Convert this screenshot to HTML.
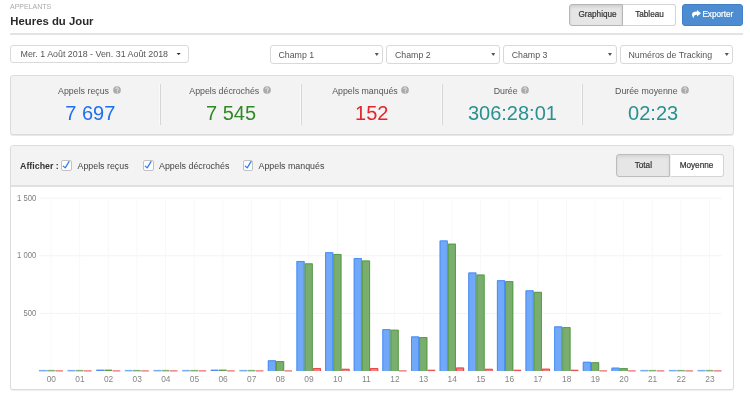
<!DOCTYPE html>
<html><head><meta charset="utf-8">
<style>
*{box-sizing:border-box;margin:0;padding:0}
html,body{width:750px;height:401px;overflow:hidden;background:#fff;font-family:"Liberation Sans",sans-serif;color:#333}
.a{position:absolute;white-space:nowrap}
.btn{position:absolute;border:1px solid #ccc;background:#fff;font-size:8.2px;-webkit-text-stroke:0.2px currentColor;color:#333;text-align:center;border-radius:3px}
.sel{position:absolute;top:45.3px;height:18.3px;width:113.7px;border:1px solid #d9d9d9;border-radius:3px;background:#fff;font-size:8.8px;color:#555;padding-left:7.8px;padding-top:0.8px;line-height:17px}
.sel .car{position:absolute;right:3.6px;top:6.6px;width:4px;height:3px;background:#555;clip-path:polygon(0 0,100% 0,50% 100%)}
.stat{position:absolute;top:0;width:140.7px;height:60px;text-align:center}
.stat .lb{position:absolute;left:0;right:2px;top:9px;font-size:8.8px;color:#555;line-height:12px}
.stat .vl{position:absolute;left:0;right:0;top:25px;font-size:20px;line-height:24px}
.q{display:inline-block;vertical-align:-0.3px;margin-left:3.6px}
.div{position:absolute;top:8.5px;width:1px;height:41px;background:#d6d6d6;box-shadow:-1px 0 0 rgba(255,255,255,.55)}
.cb{position:absolute;top:160.4px;width:10.8px;height:10.6px;border:1px solid #c2c2c2;border-radius:2px;background:#fff}
.cb svg{position:absolute;left:-1px;top:-1px}
.cbl{position:absolute;top:159.8px;font-size:8.85px;color:#444;line-height:13px}
</style></head><body><div id="root" style="position:absolute;left:0;top:0;width:750px;height:401px;will-change:transform">
<div class="a" style="left:10px;top:2.4px;font-size:7px;color:#aaa;line-height:9px">APPELANTS</div>
<div class="a" style="left:10.3px;top:14px;font-size:11.35px;font-weight:bold;color:#2a2a2a;line-height:14px">Heures du Jour</div>

<div class="btn" style="left:569px;top:4px;width:54px;height:22px;line-height:20px;padding-left:3px;background:#e6e6e6;border-color:#b5b5b5;border-radius:3px 0 0 3px;box-shadow:inset 0 2px 3px rgba(0,0,0,.1)">Graphique</div>
<div class="btn" style="left:623px;top:4px;width:53px;height:22px;line-height:20px;padding-left:1px;border-radius:0 3px 3px 0;border-left:none;border-color:#d4d4d4">Tableau</div>
<div class="btn" style="left:682px;top:4px;width:61px;height:22px;line-height:20px;background:#4d8cd1;border-color:#4180c6;color:#fff;text-align:left;padding-left:19.4px">Exporter<svg style="position:absolute;left:8.6px;top:4.9px" width="9" height="8" viewBox="0 0 9 8"><path d="M5 0 L9 3.2 L5 6.4 V4.7 H4.4 C2.9 4.7 1.9 5.5 1.7 8 C0.5 6.9 0 5.7 0 4.7 C0 2.4 1.8 1.6 4.4 1.6 H5 Z" fill="#fff"/></svg></div>

<div class="a" style="left:10px;top:33px;width:733px;height:2px;background:#e3e3e3"></div>

<div class="btn" style="left:10px;top:45px;width:178.5px;height:17.5px;line-height:16px;text-align:left;padding-left:9.5px;font-size:8.9px;color:#555;border-color:#dadada;-webkit-text-stroke:0">Mer. 1 Août 2018 - Ven. 31 Août 2018<span style="position:absolute;left:165.2px;top:6.5px;width:5px;height:2.6px;background:#222;clip-path:polygon(0 0,100% 0,50% 100%)"></span></div>

<div class="sel" style="left:269.7px">Champ 1<span class="car"></span></div>
<div class="sel" style="left:386.2px">Champ 2<span class="car"></span></div>
<div class="sel" style="left:502.9px">Champ 3<span class="car"></span></div>
<div class="sel" style="left:619.7px">Numéros de Tracking<span class="car"></span></div>

<!-- stats panel -->
<div class="a" style="left:10px;top:74.5px;width:723.5px;height:60px;background:#f3f3f3;border:1px solid #dcdcdc;border-radius:3px;box-shadow:0 1px 0 rgba(0,0,0,.09)">
  <div class="stat" style="left:9px"><div class="lb">Appels reçus<svg class="q" width="8" height="8" viewBox="0 0 8 8"><circle cx="4" cy="4" r="3.85" fill="#ababab"/><path d="M2.7 3.1 C2.7 2.2 3.3 1.8 4 1.8 C4.8 1.8 5.3 2.3 5.3 3 C5.3 3.8 4.4 3.9 4.4 4.6 V4.9" fill="none" stroke="#e2e2e2" stroke-width="1.1"/><rect x="3.85" y="5.6" width="1.1" height="1.1" fill="#e2e2e2"/></svg></div><div class="vl" style="color:#1f6fef">7 697</div></div>
  <div class="div" style="left:148.8px"></div>
  <div class="stat" style="left:149.7px"><div class="lb">Appels décrochés<svg class="q" width="8" height="8" viewBox="0 0 8 8"><circle cx="4" cy="4" r="3.85" fill="#ababab"/><path d="M2.7 3.1 C2.7 2.2 3.3 1.8 4 1.8 C4.8 1.8 5.3 2.3 5.3 3 C5.3 3.8 4.4 3.9 4.4 4.6 V4.9" fill="none" stroke="#e2e2e2" stroke-width="1.1"/><rect x="3.85" y="5.6" width="1.1" height="1.1" fill="#e2e2e2"/></svg></div><div class="vl" style="color:#2f8a25">7 545</div></div>
  <div class="div" style="left:289.8px"></div>
  <div class="stat" style="left:290.4px"><div class="lb">Appels manqués<svg class="q" width="8" height="8" viewBox="0 0 8 8"><circle cx="4" cy="4" r="3.85" fill="#ababab"/><path d="M2.7 3.1 C2.7 2.2 3.3 1.8 4 1.8 C4.8 1.8 5.3 2.3 5.3 3 C5.3 3.8 4.4 3.9 4.4 4.6 V4.9" fill="none" stroke="#e2e2e2" stroke-width="1.1"/><rect x="3.85" y="5.6" width="1.1" height="1.1" fill="#e2e2e2"/></svg></div><div class="vl" style="color:#e4262a">152</div></div>
  <div class="div" style="left:430.6px"></div>
  <div class="stat" style="left:431.1px"><div class="lb">Durée<svg class="q" width="8" height="8" viewBox="0 0 8 8"><circle cx="4" cy="4" r="3.85" fill="#ababab"/><path d="M2.7 3.1 C2.7 2.2 3.3 1.8 4 1.8 C4.8 1.8 5.3 2.3 5.3 3 C5.3 3.8 4.4 3.9 4.4 4.6 V4.9" fill="none" stroke="#e2e2e2" stroke-width="1.1"/><rect x="3.85" y="5.6" width="1.1" height="1.1" fill="#e2e2e2"/></svg></div><div class="vl" style="color:#2b9090">306:28:01</div></div>
  <div class="div" style="left:571.3px"></div>
  <div class="stat" style="left:571.8px"><div class="lb">Durée moyenne<svg class="q" width="8" height="8" viewBox="0 0 8 8"><circle cx="4" cy="4" r="3.85" fill="#ababab"/><path d="M2.7 3.1 C2.7 2.2 3.3 1.8 4 1.8 C4.8 1.8 5.3 2.3 5.3 3 C5.3 3.8 4.4 3.9 4.4 4.6 V4.9" fill="none" stroke="#e2e2e2" stroke-width="1.1"/><rect x="3.85" y="5.6" width="1.1" height="1.1" fill="#e2e2e2"/></svg></div><div class="vl" style="color:#2b9090">02:23</div></div>
</div>

<!-- chart panel -->
<div class="a" style="left:10px;top:145px;width:723.5px;height:245px;background:#fff;border:1px solid #dcdcdc;border-radius:3px;overflow:hidden;box-shadow:0 1px 1px rgba(0,0,0,.07)">
  <div class="a" style="left:0;top:0;width:100%;height:41px;background:#f3f3f3;border-bottom:2px solid #e0e0e0"></div>
</div>
<div class="a" style="left:20px;top:159.8px;font-size:8.85px;font-weight:bold;color:#333;line-height:13px">Afficher :</div>
<div class="cb" style="left:61.3px"><svg width="11" height="11" viewBox="0 0 11 11"><path d="M2.2 6.1 L4.2 7.9 L8.0 1.6" fill="none" stroke="#2a7cf4" stroke-width="1.25" stroke-linecap="round" stroke-linejoin="round"/></svg></div>
<div class="cbl" style="left:77.5px">Appels reçus</div>
<div class="cb" style="left:143px"><svg width="11" height="11" viewBox="0 0 11 11"><path d="M2.2 6.1 L4.2 7.9 L8.0 1.6" fill="none" stroke="#2a7cf4" stroke-width="1.25" stroke-linecap="round" stroke-linejoin="round"/></svg></div>
<div class="cbl" style="left:159px">Appels décrochés</div>
<div class="cb" style="left:242.5px"><svg width="11" height="11" viewBox="0 0 11 11"><path d="M2.2 6.1 L4.2 7.9 L8.0 1.6" fill="none" stroke="#2a7cf4" stroke-width="1.25" stroke-linecap="round" stroke-linejoin="round"/></svg></div>
<div class="cbl" style="left:258.5px">Appels manqués</div>

<div class="btn" style="left:616.2px;top:154.2px;width:54.3px;height:22.6px;line-height:22.2px;background:#e6e6e6;border-color:#bdbdbd;border-radius:3px 0 0 3px;box-shadow:inset 0 2px 3px rgba(0,0,0,.08)">Total</div>
<div class="btn" style="left:670.5px;top:154.2px;width:53px;height:22.6px;line-height:22px;border-radius:0 3px 3px 0;border-left:none;border-color:#d4d4d4">Moyenne</div>

<svg class="a" style="left:0;top:0" width="750" height="401" id="chart" font-family="Liberation Sans, sans-serif">
<line x1="39.5" y1="313.40" x2="721.5" y2="313.40" stroke="#f3f3f3" stroke-width="1"/>
<line x1="39.5" y1="255.80" x2="721.5" y2="255.80" stroke="#f3f3f3" stroke-width="1"/>
<line x1="39.5" y1="198.20" x2="721.5" y2="198.20" stroke="#f3f3f3" stroke-width="1"/>
<line x1="51.00" y1="198" x2="51.00" y2="371" stroke="#f8f8f8" stroke-width="1"/>
<line x1="79.64" y1="198" x2="79.64" y2="371" stroke="#f8f8f8" stroke-width="1"/>
<line x1="108.27" y1="198" x2="108.27" y2="371" stroke="#f8f8f8" stroke-width="1"/>
<line x1="136.91" y1="198" x2="136.91" y2="371" stroke="#f8f8f8" stroke-width="1"/>
<line x1="165.54" y1="198" x2="165.54" y2="371" stroke="#f8f8f8" stroke-width="1"/>
<line x1="194.18" y1="198" x2="194.18" y2="371" stroke="#f8f8f8" stroke-width="1"/>
<line x1="222.81" y1="198" x2="222.81" y2="371" stroke="#f8f8f8" stroke-width="1"/>
<line x1="251.45" y1="198" x2="251.45" y2="371" stroke="#f8f8f8" stroke-width="1"/>
<line x1="280.08" y1="198" x2="280.08" y2="371" stroke="#f8f8f8" stroke-width="1"/>
<line x1="308.72" y1="198" x2="308.72" y2="371" stroke="#f8f8f8" stroke-width="1"/>
<line x1="337.35" y1="198" x2="337.35" y2="371" stroke="#f8f8f8" stroke-width="1"/>
<line x1="365.99" y1="198" x2="365.99" y2="371" stroke="#f8f8f8" stroke-width="1"/>
<line x1="394.62" y1="198" x2="394.62" y2="371" stroke="#f8f8f8" stroke-width="1"/>
<line x1="423.25" y1="198" x2="423.25" y2="371" stroke="#f8f8f8" stroke-width="1"/>
<line x1="451.89" y1="198" x2="451.89" y2="371" stroke="#f8f8f8" stroke-width="1"/>
<line x1="480.53" y1="198" x2="480.53" y2="371" stroke="#f8f8f8" stroke-width="1"/>
<line x1="509.16" y1="198" x2="509.16" y2="371" stroke="#f8f8f8" stroke-width="1"/>
<line x1="537.80" y1="198" x2="537.80" y2="371" stroke="#f8f8f8" stroke-width="1"/>
<line x1="566.43" y1="198" x2="566.43" y2="371" stroke="#f8f8f8" stroke-width="1"/>
<line x1="595.07" y1="198" x2="595.07" y2="371" stroke="#f8f8f8" stroke-width="1"/>
<line x1="623.70" y1="198" x2="623.70" y2="371" stroke="#f8f8f8" stroke-width="1"/>
<line x1="652.34" y1="198" x2="652.34" y2="371" stroke="#f8f8f8" stroke-width="1"/>
<line x1="680.97" y1="198" x2="680.97" y2="371" stroke="#f8f8f8" stroke-width="1"/>
<line x1="709.61" y1="198" x2="709.61" y2="371" stroke="#f8f8f8" stroke-width="1"/>
<rect x="38.95" y="369.9" width="7.77" height="1.5" fill="#78acf7"/>
<rect x="47.12" y="369.9" width="7.77" height="1.5" fill="#7fb275"/>
<rect x="55.39" y="370.0" width="7.57" height="1.7" fill="#f19393"/>
<rect x="67.58" y="369.9" width="7.77" height="1.5" fill="#78acf7"/>
<rect x="75.75" y="369.9" width="7.77" height="1.5" fill="#7fb275"/>
<rect x="84.02" y="370.0" width="7.57" height="1.7" fill="#f19393"/>
<rect x="96.22" y="369.6" width="7.77" height="1.4" fill="#4a8ff5"/>
<rect x="104.39" y="369.6" width="7.77" height="1.4" fill="#5b9d4b"/>
<rect x="112.66" y="370.0" width="7.57" height="1.7" fill="#f19393"/>
<rect x="124.85" y="369.9" width="7.77" height="1.5" fill="#78acf7"/>
<rect x="133.02" y="369.9" width="7.77" height="1.5" fill="#7fb275"/>
<rect x="141.29" y="370.0" width="7.57" height="1.7" fill="#f19393"/>
<rect x="153.49" y="369.9" width="7.77" height="1.5" fill="#78acf7"/>
<rect x="161.66" y="369.9" width="7.77" height="1.5" fill="#7fb275"/>
<rect x="169.93" y="370.0" width="7.57" height="1.7" fill="#f19393"/>
<rect x="182.12" y="369.9" width="7.77" height="1.5" fill="#78acf7"/>
<rect x="190.29" y="369.9" width="7.77" height="1.5" fill="#7fb275"/>
<rect x="198.56" y="370.0" width="7.57" height="1.7" fill="#f19393"/>
<rect x="210.75" y="369.6" width="7.77" height="1.4" fill="#4a8ff5"/>
<rect x="218.92" y="369.6" width="7.77" height="1.4" fill="#5b9d4b"/>
<rect x="227.20" y="370.0" width="7.57" height="1.7" fill="#f19393"/>
<rect x="239.39" y="369.9" width="7.77" height="1.5" fill="#78acf7"/>
<rect x="247.56" y="369.9" width="7.77" height="1.5" fill="#7fb275"/>
<rect x="255.83" y="370.0" width="7.57" height="1.7" fill="#f19393"/>
<rect x="267.83" y="360.29" width="8.17" height="10.71" fill="#72a8f8"/>
<path d="M268.33 371.0 V360.79 H275.50 V371.0" fill="none" stroke="#4a8ff5" stroke-width="1"/>
<rect x="276.00" y="361.09" width="8.17" height="9.91" fill="#7aae6e"/>
<path d="M276.50 371.0 V361.59 H283.67 V371.0" fill="none" stroke="#5b9d4b" stroke-width="1"/>
<rect x="284.47" y="370.0" width="7.57" height="1.7" fill="#f19393"/>
<rect x="296.46" y="260.98" width="8.17" height="110.02" fill="#72a8f8"/>
<path d="M296.96 371.0 V261.48 H304.13 V371.0" fill="none" stroke="#4a8ff5" stroke-width="1"/>
<rect x="304.63" y="263.40" width="8.17" height="107.60" fill="#7aae6e"/>
<path d="M305.13 371.0 V263.90 H312.30 V371.0" fill="none" stroke="#5b9d4b" stroke-width="1"/>
<rect x="312.80" y="368.00" width="8.17" height="3.00" fill="#f08080"/>
<path d="M313.30 371.0 V368.50 H320.47 V371.0" fill="none" stroke="#e84a4a" stroke-width="1"/>
<rect x="325.10" y="252.23" width="8.17" height="118.77" fill="#72a8f8"/>
<path d="M325.60 371.0 V252.73 H332.77 V371.0" fill="none" stroke="#4a8ff5" stroke-width="1"/>
<rect x="333.27" y="253.96" width="8.17" height="117.04" fill="#7aae6e"/>
<path d="M333.77 371.0 V254.46 H340.94 V371.0" fill="none" stroke="#5b9d4b" stroke-width="1"/>
<rect x="341.44" y="368.81" width="8.17" height="2.19" fill="#f08080"/>
<path d="M341.94 371.0 V369.31 H349.11 V371.0" fill="none" stroke="#e84a4a" stroke-width="1"/>
<rect x="353.73" y="258.10" width="8.17" height="112.90" fill="#72a8f8"/>
<path d="M354.23 371.0 V258.60 H361.40 V371.0" fill="none" stroke="#4a8ff5" stroke-width="1"/>
<rect x="361.90" y="260.52" width="8.17" height="110.48" fill="#7aae6e"/>
<path d="M362.40 371.0 V261.02 H369.57 V371.0" fill="none" stroke="#5b9d4b" stroke-width="1"/>
<rect x="370.07" y="368.00" width="8.17" height="3.00" fill="#f08080"/>
<path d="M370.57 371.0 V368.50 H377.74 V371.0" fill="none" stroke="#e84a4a" stroke-width="1"/>
<rect x="382.37" y="329.18" width="8.17" height="41.82" fill="#72a8f8"/>
<path d="M382.87 371.0 V329.68 H390.04 V371.0" fill="none" stroke="#4a8ff5" stroke-width="1"/>
<rect x="390.54" y="329.76" width="8.17" height="41.24" fill="#7aae6e"/>
<path d="M391.04 371.0 V330.26 H398.21 V371.0" fill="none" stroke="#5b9d4b" stroke-width="1"/>
<rect x="399.00" y="370.0" width="7.57" height="1.7" fill="#f19393"/>
<rect x="411.00" y="336.44" width="8.17" height="34.56" fill="#72a8f8"/>
<path d="M411.50 371.0 V336.94 H418.67 V371.0" fill="none" stroke="#4a8ff5" stroke-width="1"/>
<rect x="419.17" y="337.02" width="8.17" height="33.98" fill="#7aae6e"/>
<path d="M419.67 371.0 V337.52 H426.84 V371.0" fill="none" stroke="#5b9d4b" stroke-width="1"/>
<rect x="427.64" y="369.7" width="7.57" height="1.4" fill="#e65454"/>
<rect x="439.64" y="240.48" width="8.17" height="130.52" fill="#72a8f8"/>
<path d="M440.14 371.0 V240.98 H447.31 V371.0" fill="none" stroke="#4a8ff5" stroke-width="1"/>
<rect x="447.81" y="243.70" width="8.17" height="127.30" fill="#7aae6e"/>
<path d="M448.31 371.0 V244.20 H455.48 V371.0" fill="none" stroke="#5b9d4b" stroke-width="1"/>
<rect x="455.98" y="367.54" width="8.17" height="3.46" fill="#f08080"/>
<path d="M456.48 371.0 V368.04 H463.65 V371.0" fill="none" stroke="#e84a4a" stroke-width="1"/>
<rect x="468.27" y="272.50" width="8.17" height="98.50" fill="#72a8f8"/>
<path d="M468.77 371.0 V273.00 H475.94 V371.0" fill="none" stroke="#4a8ff5" stroke-width="1"/>
<rect x="476.44" y="274.58" width="8.17" height="96.42" fill="#7aae6e"/>
<path d="M476.94 371.0 V275.08 H484.11 V371.0" fill="none" stroke="#5b9d4b" stroke-width="1"/>
<rect x="484.61" y="368.81" width="8.17" height="2.19" fill="#f08080"/>
<path d="M485.11 371.0 V369.31 H492.28 V371.0" fill="none" stroke="#e84a4a" stroke-width="1"/>
<rect x="496.91" y="280.22" width="8.17" height="90.78" fill="#72a8f8"/>
<path d="M497.41 371.0 V280.72 H504.58 V371.0" fill="none" stroke="#4a8ff5" stroke-width="1"/>
<rect x="505.08" y="281.14" width="8.17" height="89.86" fill="#7aae6e"/>
<path d="M505.58 371.0 V281.64 H512.75 V371.0" fill="none" stroke="#5b9d4b" stroke-width="1"/>
<rect x="513.54" y="369.7" width="7.57" height="1.4" fill="#e65454"/>
<rect x="525.54" y="290.36" width="8.17" height="80.64" fill="#72a8f8"/>
<path d="M526.04 371.0 V290.86 H533.21 V371.0" fill="none" stroke="#4a8ff5" stroke-width="1"/>
<rect x="533.71" y="291.86" width="8.17" height="79.14" fill="#7aae6e"/>
<path d="M534.21 371.0 V292.36 H541.38 V371.0" fill="none" stroke="#5b9d4b" stroke-width="1"/>
<rect x="541.88" y="368.70" width="8.17" height="2.30" fill="#f08080"/>
<path d="M542.38 371.0 V369.20 H549.55 V371.0" fill="none" stroke="#e84a4a" stroke-width="1"/>
<rect x="554.18" y="326.42" width="8.17" height="44.58" fill="#72a8f8"/>
<path d="M554.68 371.0 V326.92 H561.85 V371.0" fill="none" stroke="#4a8ff5" stroke-width="1"/>
<rect x="562.35" y="327.11" width="8.17" height="43.89" fill="#7aae6e"/>
<path d="M562.85 371.0 V327.61 H570.01 V371.0" fill="none" stroke="#5b9d4b" stroke-width="1"/>
<rect x="570.82" y="369.7" width="7.57" height="1.4" fill="#e65454"/>
<rect x="582.81" y="361.78" width="8.17" height="9.22" fill="#72a8f8"/>
<path d="M583.31 371.0 V362.28 H590.48 V371.0" fill="none" stroke="#4a8ff5" stroke-width="1"/>
<rect x="590.98" y="362.24" width="8.17" height="8.76" fill="#7aae6e"/>
<path d="M591.48 371.0 V362.74 H598.65 V371.0" fill="none" stroke="#5b9d4b" stroke-width="1"/>
<rect x="599.45" y="370.0" width="7.57" height="1.7" fill="#f19393"/>
<rect x="611.45" y="367.66" width="8.17" height="3.34" fill="#72a8f8"/>
<path d="M611.95 371.0 V368.16 H619.12 V371.0" fill="none" stroke="#4a8ff5" stroke-width="1"/>
<rect x="619.62" y="368.12" width="8.17" height="2.88" fill="#7aae6e"/>
<path d="M620.12 371.0 V368.62 H627.28 V371.0" fill="none" stroke="#5b9d4b" stroke-width="1"/>
<rect x="628.09" y="370.0" width="7.57" height="1.7" fill="#f19393"/>
<rect x="640.28" y="369.9" width="7.77" height="1.5" fill="#78acf7"/>
<rect x="648.45" y="369.9" width="7.77" height="1.5" fill="#7fb275"/>
<rect x="656.72" y="370.0" width="7.57" height="1.7" fill="#f19393"/>
<rect x="668.92" y="369.9" width="7.77" height="1.5" fill="#78acf7"/>
<rect x="677.09" y="369.9" width="7.77" height="1.5" fill="#7fb275"/>
<rect x="685.36" y="370.0" width="7.57" height="1.7" fill="#f19393"/>
<rect x="697.55" y="369.9" width="7.77" height="1.5" fill="#78acf7"/>
<rect x="705.72" y="369.9" width="7.77" height="1.5" fill="#7fb275"/>
<rect x="713.99" y="370.0" width="7.57" height="1.7" fill="#f19393"/>
<text transform="translate(36.2 315.90) scale(0.88 1)" text-anchor="end" font-size="8.7" fill="#7e7e7e">500</text>
<text transform="translate(36.2 258.30) scale(0.88 1)" text-anchor="end" font-size="8.7" fill="#7e7e7e">1 000</text>
<text transform="translate(36.2 200.70) scale(0.88 1)" text-anchor="end" font-size="8.7" fill="#7e7e7e">1 500</text>
<text x="51.30" y="381.6" text-anchor="middle" font-size="8.4" fill="#858585">00</text>
<text x="79.94" y="381.6" text-anchor="middle" font-size="8.4" fill="#858585">01</text>
<text x="108.57" y="381.6" text-anchor="middle" font-size="8.4" fill="#858585">02</text>
<text x="137.21" y="381.6" text-anchor="middle" font-size="8.4" fill="#858585">03</text>
<text x="165.84" y="381.6" text-anchor="middle" font-size="8.4" fill="#858585">04</text>
<text x="194.48" y="381.6" text-anchor="middle" font-size="8.4" fill="#858585">05</text>
<text x="223.11" y="381.6" text-anchor="middle" font-size="8.4" fill="#858585">06</text>
<text x="251.75" y="381.6" text-anchor="middle" font-size="8.4" fill="#858585">07</text>
<text x="280.38" y="381.6" text-anchor="middle" font-size="8.4" fill="#858585">08</text>
<text x="309.02" y="381.6" text-anchor="middle" font-size="8.4" fill="#858585">09</text>
<text x="337.65" y="381.6" text-anchor="middle" font-size="8.4" fill="#858585">10</text>
<text x="366.29" y="381.6" text-anchor="middle" font-size="8.4" fill="#858585">11</text>
<text x="394.92" y="381.6" text-anchor="middle" font-size="8.4" fill="#858585">12</text>
<text x="423.56" y="381.6" text-anchor="middle" font-size="8.4" fill="#858585">13</text>
<text x="452.19" y="381.6" text-anchor="middle" font-size="8.4" fill="#858585">14</text>
<text x="480.83" y="381.6" text-anchor="middle" font-size="8.4" fill="#858585">15</text>
<text x="509.46" y="381.6" text-anchor="middle" font-size="8.4" fill="#858585">16</text>
<text x="538.10" y="381.6" text-anchor="middle" font-size="8.4" fill="#858585">17</text>
<text x="566.73" y="381.6" text-anchor="middle" font-size="8.4" fill="#858585">18</text>
<text x="595.37" y="381.6" text-anchor="middle" font-size="8.4" fill="#858585">19</text>
<text x="624.00" y="381.6" text-anchor="middle" font-size="8.4" fill="#858585">20</text>
<text x="652.63" y="381.6" text-anchor="middle" font-size="8.4" fill="#858585">21</text>
<text x="681.27" y="381.6" text-anchor="middle" font-size="8.4" fill="#858585">22</text>
<text x="709.90" y="381.6" text-anchor="middle" font-size="8.4" fill="#858585">23</text>
</svg>
</div></body></html>
